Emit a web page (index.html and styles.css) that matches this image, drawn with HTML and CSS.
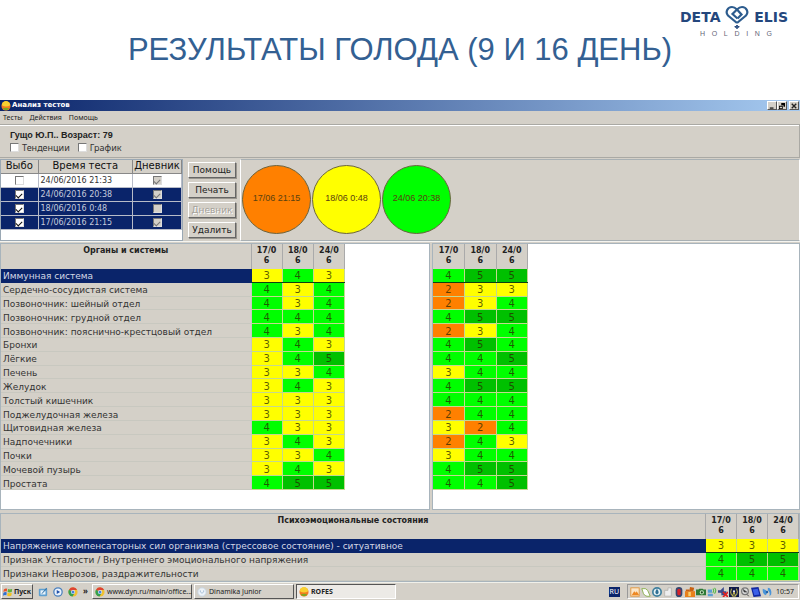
FILE: index.html
```html
<!DOCTYPE html>
<html lang="ru">
<head>
<meta charset="utf-8">
<title>Результаты голода</title>
<link rel="stylesheet" href="styles.css">
</head>
<body>
<header class="slide-head">
  <h1>РЕЗУЛЬТАТЫ ГОЛОДА (9 И 16 ДЕНЬ)</h1>
  <div class="logo">
    <div class="logo-name">
      <span>DETA</span>
      <svg class="logo-mark" viewBox="0 0 24 24" fill="none" stroke="#2d5c8e" stroke-width="2.200">
        <path d="M12 18 3 10.500C0 7 2.500 2 7 2c2 0 3.500 1 5 2.500l4.500 5-4 4"/>
        <path d="M12 18l9-7.500C24 7 21.500 2 17 2c-2 0-3.500 1-5 2.500L7.500 9l5 4.500"/>
        <path d="M12 20l.8 1.400 1.500.3-1.500.8-.8 1.300-.8-1.300-1.500-.8 1.500-.3z" fill="#24477d" stroke-width="1" stroke="#24477d"/>
      </svg>
      <span>ELIS</span>
    </div>
    <div class="logo-sub"><span>H</span><span>O</span><span>L</span><span>D</span><span>I</span><span>N</span><span>G</span></div>
  </div>
</header>

<main class="window">
  <div class="titlebar">
    <svg class="ico" viewBox="0 0 12 12"><circle cx="6" cy="6" r="5.500" fill="#f47b20"/><path d="M1 5a5 5 0 0 1 10 0q-5 3-10 0z" fill="#f8d030"/><path d="M2 9q4 4 8 0-4-2-8 0z" fill="#79a91f"/></svg>
    <span class="titlebar-text">Анализ тестов</span>
    <button class="cap" aria-label="Свернуть"><svg viewBox="0 0 8 8"><path d="M1 6h5v1.500H1z"/></svg></button>
    <button class="cap" aria-label="Восстановить"><svg viewBox="0 0 8 8"><path d="M3 0h5v5H6V3H3zM0 3.500h5V8H0zM1 5v2h3V5z" fill-rule="evenodd"/></svg></button>
    <button class="cap cap-close" aria-label="Закрыть"><svg viewBox="0 0 8 8"><path d="M1 1l6 6M7 1L1 7" stroke="#222" stroke-width="1.800"/></svg></button>
  </div>
  <nav class="menu"><a href="#">Тесты</a><a href="#">Действия</a><a href="#">Помощь</a></nav>

  <section class="patient">
    <strong>Гущо Ю.П.. Возраст: 79</strong>
    <div class="options">
      <label><input type="checkbox">Тенденции</label>
      <label><input type="checkbox">График</label>
    </div>
  </section>

  <section class="middle">
    <div class="tests-box">
      <table class="tests">
        <colgroup><col class="c-pick"><col><col class="c-diary"></colgroup>
        <thead><tr><th>Выбо</th><th>Время теста</th><th>Дневник</th></tr></thead>
        <tbody>
          <tr><td><input type="checkbox" aria-label="Выбрать 24/06/2016 21:33"></td><td class="time">24/06/2016 21:33</td><td><input type="checkbox" checked disabled aria-label="Дневник 24/06/2016 21:33"></td></tr>
          <tr class="sel"><td><input type="checkbox" checked aria-label="Выбрать 24/06/2016 20:38"></td><td class="time">24/06/2016 20:38</td><td><input type="checkbox" checked disabled aria-label="Дневник 24/06/2016 20:38"></td></tr>
          <tr class="sel"><td><input type="checkbox" checked aria-label="Выбрать 18/06/2016 0:48"></td><td class="time">18/06/2016 0:48</td><td><input type="checkbox" disabled aria-label="Дневник 18/06/2016 0:48"></td></tr>
          <tr class="sel"><td><input type="checkbox" checked aria-label="Выбрать 17/06/2016 21:15"></td><td class="time">17/06/2016 21:15</td><td><input type="checkbox" checked disabled aria-label="Дневник 17/06/2016 21:15"></td></tr>
        </tbody>
      </table>
    </div>
    <div class="actions">
      <button>Помощь</button>
      <button>Печать</button>
      <button disabled>Дневник</button>
      <button>Удалить</button>
    </div>
    <div class="circles">
      <div class="circle b2">17/06 21:15</div>
      <div class="circle b3">18/06 0:48</div>
      <div class="circle b4">24/06 20:38</div>
    </div>
  </section>

  <section class="panes">
    <div class="pane pane-left">
      <table class="grid grid-organs">
        <colgroup><col class="c-name"><col><col><col></colgroup>
        <thead><tr><th>Органы и системы</th><th>17/0<br>6</th><th>18/0<br>6</th><th>24/0<br>6</th></tr></thead>
        <tbody>
          <tr class="sel"><td>Иммунная система</td><td class="b3">3</td><td class="b4">4</td><td class="b3">3</td></tr>
          <tr><td>Сердечно-сосудистая система</td><td class="b4">4</td><td class="b3">3</td><td class="b4">4</td></tr>
          <tr><td>Позвоночник: шейный отдел</td><td class="b4">4</td><td class="b3">3</td><td class="b4">4</td></tr>
          <tr><td>Позвоночник: грудной отдел</td><td class="b4">4</td><td class="b4">4</td><td class="b4">4</td></tr>
          <tr><td>Позвоночник: пояснично-крестцовый отдел</td><td class="b4">4</td><td class="b3">3</td><td class="b4">4</td></tr>
          <tr><td>Бронхи</td><td class="b3">3</td><td class="b4">4</td><td class="b3">3</td></tr>
          <tr><td>Лёгкие</td><td class="b3">3</td><td class="b4">4</td><td class="b5">5</td></tr>
          <tr><td>Печень</td><td class="b3">3</td><td class="b3">3</td><td class="b4">4</td></tr>
          <tr><td>Желудок</td><td class="b3">3</td><td class="b4">4</td><td class="b3">3</td></tr>
          <tr><td>Толстый кишечник</td><td class="b3">3</td><td class="b3">3</td><td class="b3">3</td></tr>
          <tr><td>Поджелудочная железа</td><td class="b3">3</td><td class="b3">3</td><td class="b3">3</td></tr>
          <tr><td>Щитовидная железа</td><td class="b4">4</td><td class="b3">3</td><td class="b3">3</td></tr>
          <tr><td>Надпочечники</td><td class="b3">3</td><td class="b4">4</td><td class="b3">3</td></tr>
          <tr><td>Почки</td><td class="b3">3</td><td class="b3">3</td><td class="b4">4</td></tr>
          <tr><td>Мочевой пузырь</td><td class="b3">3</td><td class="b4">4</td><td class="b3">3</td></tr>
          <tr><td>Простата</td><td class="b4">4</td><td class="b5">5</td><td class="b5">5</td></tr>
        </tbody>
      </table>
    </div>
    <div class="pane pane-right">
      <table class="grid grid-values">
        <thead><tr><th>17/0<br>6</th><th>18/0<br>6</th><th>24/0<br>6</th></tr></thead>
        <tbody>
          <tr class="sel"><td class="b4">4</td><td class="b5">5</td><td class="b5">5</td></tr>
          <tr><td class="b2">2</td><td class="b3">3</td><td class="b3">3</td></tr>
          <tr><td class="b2">2</td><td class="b3">3</td><td class="b4">4</td></tr>
          <tr><td class="b4">4</td><td class="b5">5</td><td class="b5">5</td></tr>
          <tr><td class="b2">2</td><td class="b3">3</td><td class="b4">4</td></tr>
          <tr><td class="b4">4</td><td class="b5">5</td><td class="b4">4</td></tr>
          <tr><td class="b4">4</td><td class="b4">4</td><td class="b5">5</td></tr>
          <tr><td class="b3">3</td><td class="b4">4</td><td class="b4">4</td></tr>
          <tr><td class="b4">4</td><td class="b5">5</td><td class="b5">5</td></tr>
          <tr><td class="b4">4</td><td class="b4">4</td><td class="b4">4</td></tr>
          <tr><td class="b2">2</td><td class="b4">4</td><td class="b4">4</td></tr>
          <tr><td class="b3">3</td><td class="b2">2</td><td class="b4">4</td></tr>
          <tr><td class="b2">2</td><td class="b4">4</td><td class="b3">3</td></tr>
          <tr><td class="b3">3</td><td class="b4">4</td><td class="b4">4</td></tr>
          <tr><td class="b4">4</td><td class="b5">5</td><td class="b5">5</td></tr>
          <tr><td class="b4">4</td><td class="b4">4</td><td class="b5">5</td></tr>
        </tbody>
      </table>
    </div>
  </section>

  <section class="psycho">
    <table class="grid grid-psycho">
      <colgroup><col><col class="c-val"><col class="c-val"><col class="c-val"></colgroup>
      <thead><tr><th>Психоэмоциональные состояния</th><th>17/0<br>6</th><th>18/0<br>6</th><th>24/0<br>6</th></tr></thead>
      <tbody>
        <tr class="sel"><td>Напряжение компенсаторных сил организма (стрессовое состояние) - ситуативное</td><td class="b3">3</td><td class="b3">3</td><td class="b3">3</td></tr>
        <tr><td>Признак Усталости / Внутреннего эмоционального напряжения</td><td class="b4">4</td><td class="b5">5</td><td class="b5">5</td></tr>
        <tr><td>Признаки Неврозов, раздражительности</td><td class="b4">4</td><td class="b4">4</td><td class="b4">4</td></tr>
      </tbody>
    </table>
  </section>
</main>

<footer class="taskbar">
  <button class="start"><svg class="ico" viewBox="0 0 12 12"><path d="M1 3q2-2 4-1L4.500 5.500q-2-1-4 .5z" fill="#e8532b"/><path d="M6 2.500q2 1 5 0L10.500 6q-3 1-5 0z" fill="#5fae3c"/><path d="M.5 7q2-1.500 4-.5L4 10q-2-1-4 .5z" fill="#2f6fd0"/><path d="M5.500 7q2 1 5 0L10 10.500q-3 1-5 0z" fill="#f2c21c"/></svg>Пуск</button>
  <div class="quick">
    <svg class="ico" viewBox="0 0 12 12"><rect x="1" y="2" width="10" height="9" rx="1" fill="#5e9fd0"/><path d="M3 4h6v5H3z" fill="#e8f3fb"/><path d="M4 8l6-7 1 1-6 6z" fill="#3577ac"/></svg>
    <svg class="ico" viewBox="0 0 12 12"><circle cx="6" cy="6" r="5" fill="#eaf2fb" stroke="#4a7fbc" stroke-width="1.500"/><path d="M4.500 3.500l4 2.500-4 2.500z" fill="#1f4fa8"/></svg>
    <svg class="ico" viewBox="0 0 12 12"><circle cx="6" cy="6" r="5.500" fill="#f0c030"/><path d="M6 6L1.200 3.300A5.500 5.500 0 0 1 11 3.500H6z" fill="#dd4433"/><path d="M6 6L1.200 3.300A5.500 5.500 0 0 0 5.500 11.500L8 7z" fill="#35a050"/><circle cx="6" cy="6" r="2.500" fill="#fff"/><circle cx="6" cy="6" r="1.900" fill="#4a80d8"/></svg>
    <span class="more">»</span>
  </div>
  <div class="tasks">
    <button><svg class="ico" viewBox="0 0 12 12"><circle cx="6" cy="6" r="5.500" fill="#f0c030"/><path d="M6 6L1.200 3.300A5.500 5.500 0 0 1 11 3.500H6z" fill="#dd4433"/><path d="M6 6L1.200 3.300A5.500 5.500 0 0 0 5.500 11.500L8 7z" fill="#35a050"/><circle cx="6" cy="6" r="2.500" fill="#fff"/><circle cx="6" cy="6" r="1.900" fill="#4a80d8"/></svg>www.dyn.ru/main/office...</button>
    <button><svg class="ico" viewBox="0 0 12 12"><circle cx="6" cy="6" r="5" fill="#eef3f8" stroke="#c3d2e0"/><path d="M4 4v2q2 3 4 0V4" fill="none" stroke="#9db8d2"/></svg>Dinamika Junior</button>
    <button class="active"><svg class="ico" viewBox="0 0 12 12"><circle cx="6" cy="6" r="5.500" fill="#f47b20"/><path d="M1 5a5 5 0 0 1 10 0q-5 3-10 0z" fill="#f8d030"/><path d="M2 9q4 4 8 0-4-2-8 0z" fill="#79a91f"/></svg>ROFES</button>
  </div>
  <span class="lang">RU</span>
  <div class="tray">
    <svg class="ico" viewBox="0 0 12 12"><rect x="1" y="1" width="10" height="10" fill="#fbe6c8" stroke="#e09030"/><path d="M2 10l3-5 2 2 1-2 3 5z" fill="#ee8822"/></svg>
    <svg class="ico" viewBox="0 0 12 12"><path d="M1 2q5-1 7 2l3 7q-6 1-8-3z" fill="#fff" stroke="#7ea83c"/></svg>
    <svg class="ico" viewBox="0 0 12 12"><circle cx="6" cy="6" r="5" fill="#e6f2f6" stroke="#3f7f9d" stroke-width="2"/><path d="M6 2q4 5 0 7-4-2 0-7z" fill="#2f6f94"/></svg>
    <svg class="ico" viewBox="0 0 12 12"><path d="M2 4h4V1h4v10H2z" fill="#eee" stroke="#b5b3ae"/></svg>
    <svg class="ico" viewBox="0 0 12 12"><rect x="2" y="0" width="8" height="12" rx="4" fill="#34466f"/><rect x="4" y="2" width="4" height="8" rx="2" fill="#d8232a"/></svg>
    <svg class="ico" viewBox="0 0 12 12"><path d="M0 5h12v7H0z" fill="#e8801a"/><path d="M5 5l1-5 5 1-1 4zM1 3h4v2H1z" fill="#c86010"/><path d="M4 6h3v5H4z" fill="#f8d070"/></svg>
    <svg class="ico" viewBox="0 0 12 12"><path d="M0 3h3l1-1h4l1 1h3v7H0z" fill="#2c7a35"/><circle cx="7" cy="6.500" r="2.500" fill="#c8e6c0"/><circle cx="7" cy="6.500" r="1.300" fill="#184a20"/></svg>
    <svg class="ico" viewBox="0 0 12 12"><path d="M1 3h5v4H1zM1 8h6v3H1z" fill="#5b9fd2"/><path d="M7 2q2 2 0 5M9 1q3 3 0 7" fill="none" stroke="#56b94a" stroke-width="1.300"/></svg>
    <svg class="ico" viewBox="0 0 12 12"><path d="M0 4h3l4-4v9L3 7H0zM4 5h6v5H4z" fill="#3c4c8c"/><path d="M6 6l6 6M12 6l-6 6" stroke="#e02020" stroke-width="2"/></svg>
    <svg class="ico" viewBox="0 0 12 12"><path d="M0 0h12v12H0z" fill="#111a48"/><path d="M3 2q-2 4 0 8M9 2q2 4 0 8M6 6L4 11h4z" fill="none" stroke="#f0e050"/><circle cx="6" cy="5" r="1.200" fill="#fff"/></svg>
    <svg class="ico" viewBox="0 0 12 12"><circle cx="6" cy="5" r="4" fill="#ddd" stroke="#777" stroke-width="1.500"/><path d="M4 3l4 3H5zM8 9l3 2" stroke="#555"/></svg>
    <svg class="ico" viewBox="0 0 12 12"><path d="M0 1l9-1 3 11-9 1z" fill="#1228a0"/><path d="M2 3l6-1 2 7-6 1z" fill="#3c60e8"/></svg>
    <svg class="ico" viewBox="0 0 12 12"><path d="M1 2q-1 5 3 8l2-2q-2-2-1-4zM7 1q5 0 4 8l-2 2q1-5-2-7z" fill="#4a94d8"/><circle cx="6" cy="6" r="1.500" fill="#2463a8"/></svg>
    <time>10:57</time>
  </div>
</footer>
</body>
</html>
```
FILE: styles.css
```css
* { box-sizing: border-box; }

body {
  margin: 0;
  min-height: 100vh;
  display: flex;
  flex-direction: column;
  background: #fff;
  color: #333;
  font: 9px/12px "DejaVu Sans", sans-serif;
}

button, input { margin: 0; font: inherit; color: inherit; }

/* Slide heading */
.slide-head { position: relative; height: 100px; padding-top: 32px; }
h1 {
  margin: 0;
  text-align: center;
  color: #336092;
  font: 31px/36px "Liberation Sans", sans-serif;
}
.logo { position: absolute; top: 6px; right: 12px; width: 108px; color: #24477d; }
.logo-name {
  display: flex;
  align-items: center;
  justify-content: space-between;
  height: 22px;
  font: bold 14px/20px "DejaVu Sans", sans-serif;
}
.logo-mark { width: 24px; height: 24px; }
.logo-sub {
  display: flex;
  justify-content: space-between;
  margin: 2px 16px 0 20px;
  color: #667;
  font: 7px/8px "Liberation Sans", sans-serif;
}

/* Application window */
.window { flex: 1; display: flex; flex-direction: column; background: #d4d0c8; }
.ico { width: 10px; height: 10px; flex: none; }
.titlebar {
  display: flex;
  align-items: center;
  height: 11px;
  padding: 0 1px;
  background: linear-gradient(90deg, #0a246a, #a6caf0);
  color: #fff;
  font: bold 7px/11px "DejaVu Sans", sans-serif;
}
.titlebar-text { flex: 1; padding-left: 1px; }
.cap {
  display: flex;
  align-items: center;
  justify-content: center;
  width: 10px;
  height: 9px;
  padding: 0;
  background: #d4d0c8;
  border: 1px solid;
  border-color: #fff #555 #555 #fff;
}
.cap svg { width: 6px; height: 6px; }
.cap-close { margin-left: 2px; }
.menu { display: flex; gap: 7px; height: 13px; padding-left: 3px; font: 7px/13px "Noto Sans", sans-serif; }
.menu a { color: #222; text-decoration: none; }

.patient {
  height: 34px;
  padding: 4px 10px 0;
  border: 1px solid #aaa9a4;
  border-left: 0;
  box-shadow: inset 0 1px #fff;
}
.patient strong { display: block; color: #222; font: bold 9px/12px "Liberation Sans", sans-serif; }
.options { display: flex; gap: 8px; font: 9px/13px "Noto Sans", sans-serif; }
.options label { display: flex; align-items: center; gap: 3px; }

input[type="checkbox"] {
  appearance: none;
  display: inline-flex;
  align-items: center;
  justify-content: center;
  width: 9px;
  height: 9px;
  background: #fff;
  border: 1px solid;
  border-color: #777 #ddd #ddd #777;
  vertical-align: middle;
}
input[type="checkbox"]:checked::before {
  content: "";
  width: 5px;
  height: 3px;
  border: solid #111;
  border-width: 0 0 1px 1px;
  transform: rotate(-45deg);
}
input[type="checkbox"]:disabled { background: #d4d0c8; }
input[type="checkbox"]:disabled::before { border-color: #777; }

.middle { display: flex; height: 84px; padding-top: 1px; border-bottom: 1px solid #f4f4f0; }
.tests-box { width: 183px; border: 1px solid #9aa8b4; background: #fff; }
table { border-collapse: collapse; table-layout: fixed; }
th, td { padding: 0; }
.tests { width: 100%; height: 68px; }
.c-pick { width: 37px; }
.c-diary { width: 49px; }
.tests th {
  height: 13px;
  background: #d4d0c8;
  border-right: 1px solid #888;
  border-bottom: 1px solid #888;
  font: 10px/12px "DejaVu Sans", sans-serif;
  color: #111;
}
.tests td { text-align: center; line-height: 12px; border: 1px solid #b8bcc8; border-width: 0 1px 1px 0; }
.tests .time { text-align: left; padding: 1px 0 0 2px; font-size: 8px; }
.tests .sel { background: #0a246a; color: #c5cbdc; }

.actions { display: flex; flex-direction: column; gap: 4px; width: 57px; padding: 3px 4px 0 5px; }
.actions button {
  height: 16px;
  padding: 0;
  background: #d4d0c8;
  border: 1px solid;
  border-color: #fff #666 #666 #fff;
  box-shadow: 1px 1px #99968f;
  color: #222;
  font: 9px/13px "DejaVu Sans", sans-serif;
}
.actions button:disabled { color: #a5a29b; text-shadow: 1px 1px #fff; }
.circles {
  flex: 1;
  display: flex;
  gap: 1px;
  padding: 5px 1px;
  border: 1px solid;
  border-color: #a8b0b4 #fff #a8b0b4 #fff;
}
.circle {
  width: 69px;
  height: 69px;
  border: 1px solid #6b6440;
  border-radius: 50%;
  text-align: center;
  color: #5a4010;
  font: 9px/64px "Liberation Sans", sans-serif;
}

.b2 { background: #ff8000; }
.b3 { background: #ff0; }
.b4 { background: #0f0; }
.b5 { background: #00c000; }

/* Result tables */
.panes { flex: 1; display: flex; gap: 2px; padding-top: 1px; }
.pane { background: #fff; border: 1px solid #a8b4bc; }
.pane-left { width: 430px; }
.pane-right { flex: 1; }
.grid th {
  height: 25px;
  padding-top: 2px;
  background: #d4d0c8;
  border-right: 1px solid #aaa;
  vertical-align: top;
  color: #222;
  font: bold 8px/10px "DejaVu Sans", sans-serif;
}
.grid td {
  padding: 2px 0 0;
  background-clip: padding-box;
  border: 1px solid #c8c8c0;
  border-width: 0 1px 1px 0;
  text-align: center;
  line-height: 10px;
  white-space: nowrap;
  color: #333;
}
.grid td[class] { color: rgba(40, 40, 0, .75); border-color: #c4d890; font-size: 10px; }
.grid td:not([class]) { text-align: left; padding-left: 2px; background: #d4d0c8; }
.grid .sel td:not([class]) { background: #0a246a; color: #d4d8e6; border-color: #0a246a; }
.grid .sel td[class] { border-bottom-color: #104010; }
.grid-organs { width: 344px; height: 246px; }
.grid-values { width: 95px; height: 246px; }
.c-name { width: 250px; }
.c-val { width: 31px; }

.psycho { margin-top: 3px; border: 1px solid #a8b4bc; }
.grid-psycho { width: 100%; height: 67px; }

/* Taskbar */
.taskbar {
  display: flex;
  align-items: center;
  height: 18px;
  padding: 0 1px;
  background: #d4d0c8;
  border-top: 1px solid #f0f0ea;
  color: #222;
  font: 7px/12px "Noto Sans", sans-serif;
}
.taskbar button {
  display: flex;
  align-items: center;
  gap: 2px;
  height: 15px;
  padding: 0 2px;
  background: #d4d0c8;
  border: 1px solid;
  border-color: #fff #555 #555 #fff;
  white-space: nowrap;
}
.taskbar .start { width: 32px; padding: 0 1px; font-weight: bold; gap: 1px; }
.quick { display: flex; align-items: center; gap: 5px; width: 59px; padding-left: 5px; }
.more { font-weight: bold; font-size: 8px; line-height: 8px; align-self: flex-start; }
.tasks { flex: 1; display: flex; gap: 2px; }
.tasks button { width: 100px; }
.taskbar .active { background: #eceae6; border-color: #555 #fff #fff #555; font-weight: bold; }
.lang { padding: 0 1px; margin-right: 7px; background: #0a246a; color: #fff; line-height: 10px; }
.tray {
  display: flex;
  align-items: center;
  gap: 1px;
  height: 15px;
  padding: 0 4px 0 2px;
  border: 1px solid;
  border-color: #999 #fff #fff #999;
}
.tray time { padding-left: 3px; }
```
